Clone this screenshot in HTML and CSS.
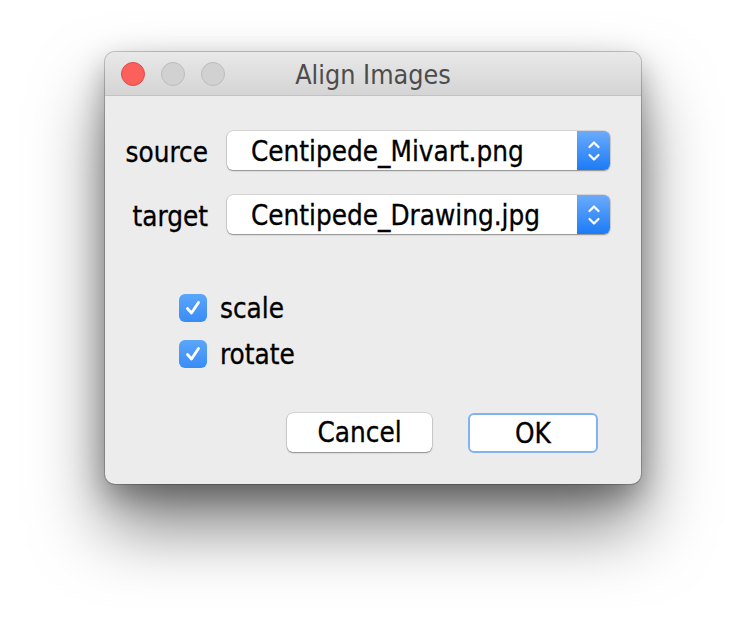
FILE: index.html
```html
<!DOCTYPE html>
<html>
<head>
<meta charset="utf-8">
<link rel="stylesheet" href="styles.css">
</head>
<body>
<div class="stage">
  <div class="window">
    <div class="titlebar">
      <div class="lights">
        <span class="light red"></span>
        <span class="light grey"></span>
        <span class="light grey"></span>
      </div>
      <div class="title">Align Images</div>
    </div>
    <div class="content">
      <div class="form">
        <div class="label">source</div>
        <div class="popup">
          <span class="popup-text">Centipede_Mivart.png</span>
          <span class="stepper">
            <svg width="14" height="24" viewBox="0 0 14 24"><path d="M2.5 8 L7 3.5 L11.5 8 M2.5 16 L7 20.5 L11.5 16" fill="none" stroke="#fff" stroke-width="2.2" stroke-linecap="round" stroke-linejoin="round"/></svg>
          </span>
        </div>
        <div class="label">target</div>
        <div class="popup">
          <span class="popup-text">Centipede_Drawing.jpg</span>
          <span class="stepper">
            <svg width="14" height="24" viewBox="0 0 14 24"><path d="M2.5 8 L7 3.5 L11.5 8 M2.5 16 L7 20.5 L11.5 16" fill="none" stroke="#fff" stroke-width="2.2" stroke-linecap="round" stroke-linejoin="round"/></svg>
          </span>
        </div>
      </div>
      <div class="checks">
        <label class="check">
          <span class="box"><svg width="20" height="20" viewBox="0 0 20 20"><path d="M4.5 10.5 L8.5 15 L15.5 4.5" fill="none" stroke="#fff" stroke-width="2.8" stroke-linecap="round" stroke-linejoin="round"/></svg></span>
          <span class="check-text">scale</span>
        </label>
        <label class="check">
          <span class="box"><svg width="20" height="20" viewBox="0 0 20 20"><path d="M4.5 10.5 L8.5 15 L15.5 4.5" fill="none" stroke="#fff" stroke-width="2.8" stroke-linecap="round" stroke-linejoin="round"/></svg></span>
          <span class="check-text">rotate</span>
        </label>
      </div>
      <div class="buttons">
        <div class="btn">Cancel</div>
        <div class="btn default">OK</div>
      </div>
    </div>
  </div>
</div>
</body>
</html>
```
FILE: styles.css
```css
html, body {
  margin: 0;
  padding: 0;
  background: #ffffff;
}
body {
  font-family: "DejaVu Sans Condensed", "DejaVu Sans", sans-serif;
  font-stretch: semi-condensed;
  width: 746px;
  height: 632px;
  overflow: hidden;
}
.stage {
  padding: 52px 0 0 105px;
}
.window {
  width: 536px;
  height: 432px;
  background: #ececec;
  border-radius: 10px;
  box-shadow: 0 0 0 1px rgba(0,0,0,0.2), 0 42px 70px rgba(0,0,0,0.5), 0 12px 30px rgba(0,0,0,0.3);
  overflow: hidden;
  display: flex;
  flex-direction: column;
}
.titlebar {
  height: 43px;
  background: linear-gradient(#e9e9e9, #d4d4d4);
  border-bottom: 1px solid #c2c2c2;
  display: flex;
  align-items: center;
  position: relative;
}
.lights {
  display: flex;
  gap: 16px;
  padding-left: 16px;
}
.light {
  width: 24px;
  height: 24px;
  border-radius: 50%;
  box-sizing: border-box;
}
.light.red {
  background: #fc605c;
  border: 1px solid #de4a45;
}
.light.grey {
  background: #d1d1d1;
  border: 1px solid #bcbcbc;
}
.title {
  position: absolute;
  left: 0;
  right: 0;
  top: 2px;
  bottom: 0;
  display: flex;
  align-items: center;
  justify-content: center;
  font-size: 26.7px;
  color: #4c4c4c;
  pointer-events: none;
}
.content {
  flex: 1;
  display: flex;
  flex-direction: column;
  padding: 35px 31px 0 20px;
}
.form {
  display: grid;
  grid-template-columns: 83px 383px;
  column-gap: 19px;
  row-gap: 25px;
  align-items: center;
}
.label {
  text-align: right;
  font-size: 27.6px;
  padding-top: 3px;
  color: #000;
  white-space: nowrap;
  -webkit-text-stroke: 0.3px #000;
}
.popup {
  height: 39px;
  background: #fff;
  border-radius: 6px;
  box-shadow: 0 0 0 0.5px rgba(0,0,0,0.18), 0 1px 1.5px rgba(0,0,0,0.35);
  display: flex;
  align-items: center;
  overflow: hidden;
}
.popup-text {
  flex: 1;
  padding-left: 24px;
  padding-top: 2px;
  font-size: 27.6px;
  color: #000;
  white-space: nowrap;
  -webkit-text-stroke: 0.3px #000;
}
.stepper {
  width: 33px;
  height: 100%;
  background: linear-gradient(#6cabfb, #1b7bf6);
  display: flex;
  align-items: center;
  justify-content: center;
}
.checks {
  display: flex;
  flex-direction: column;
  gap: 18px;
  padding: 60px 0 0 54px;
}
.check {
  display: flex;
  align-items: center;
  gap: 13px;
  height: 28px;
}
.box {
  width: 28px;
  height: 28px;
  border-radius: 6px;
  background: linear-gradient(#5aa6fa, #3a8cf6);
  display: flex;
  align-items: center;
  justify-content: center;
}
.check-text {
  font-size: 27.6px;
  line-height: 28px;
  padding-top: 1px;
  color: #000;
  -webkit-text-stroke: 0.3px #000;
}
.buttons {
  display: flex;
  justify-content: flex-end;
  gap: 36px;
  padding: 45px 12px 0 0;
}
.btn {
  width: 145px;
  height: 39px;
  box-sizing: border-box;
  background: #fff;
  border-radius: 6px;
  box-shadow: 0 0 0 0.5px rgba(0,0,0,0.2), 0 1px 1.5px rgba(0,0,0,0.35);
  display: flex;
  align-items: center;
  justify-content: center;
  font-size: 27.6px;
  color: #000;
  -webkit-text-stroke: 0.3px #000;
}
.btn.default {
  width: 130px;
  height: 40px;
  border: 2px solid #80b3f2;
  box-shadow: none;
}
```
